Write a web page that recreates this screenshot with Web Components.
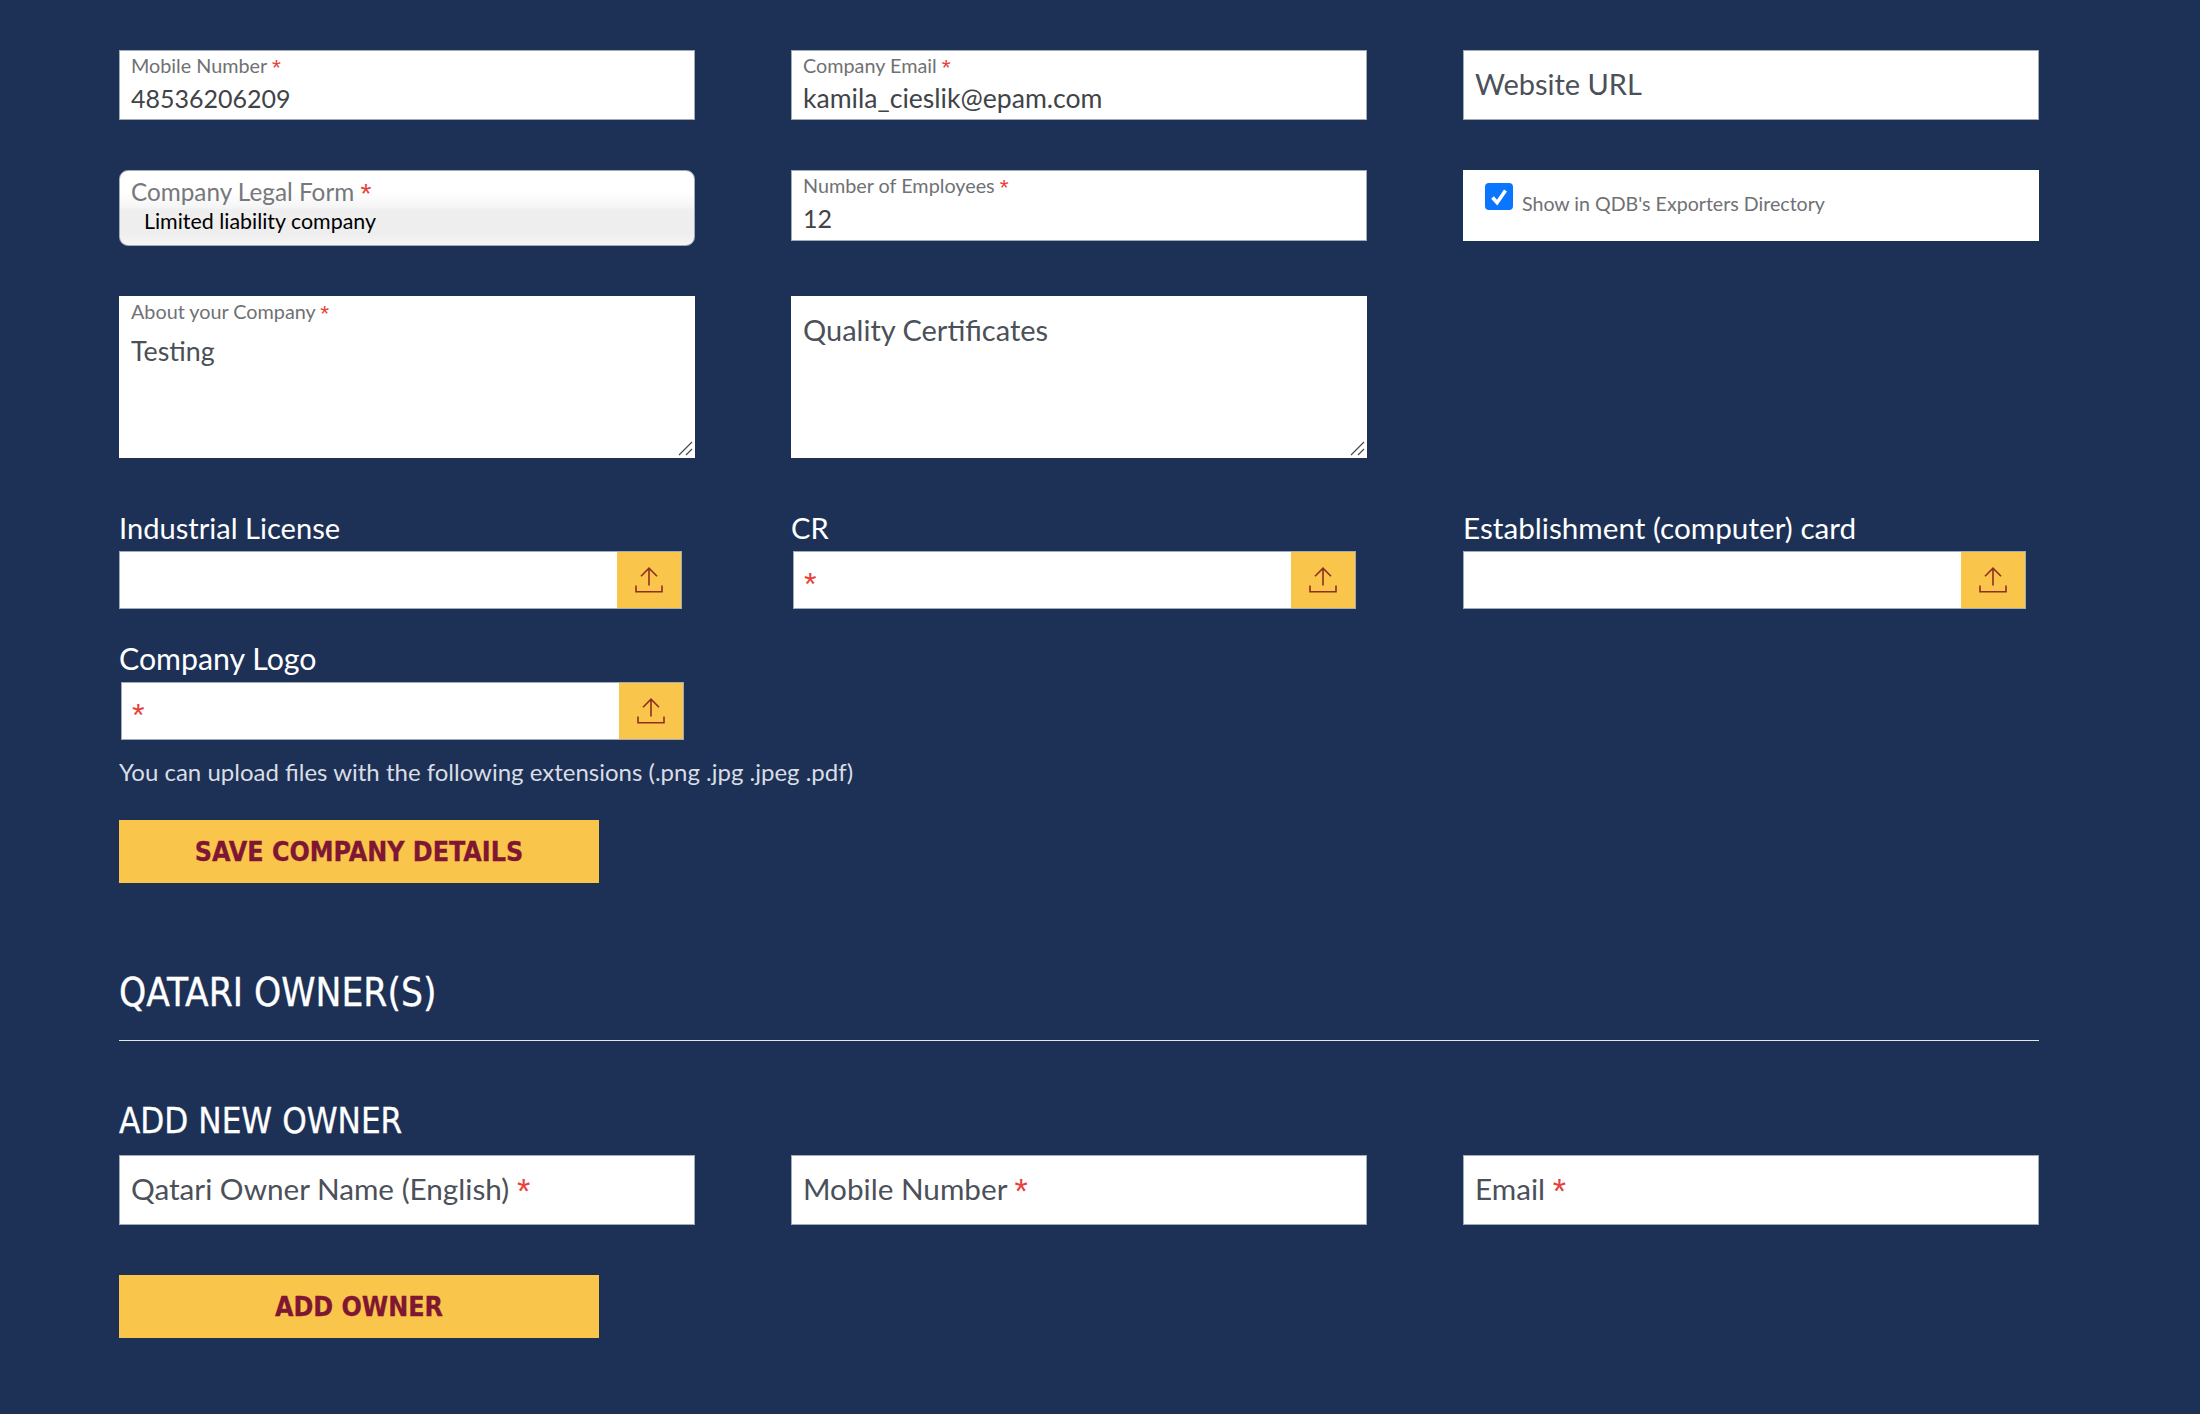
<!DOCTYPE html>
<html lang="en"><head><meta charset="utf-8"><title>Company details</title>
<style>
html,body{margin:0;padding:0;background:#1d3156;}
body{font-family:"Lato","Noto Sans",sans-serif;color:#fff;width:2200px;height:1414px;overflow:hidden;}
</style></head><body>
<qdb-page>
  <qdb-grid style="--mb:50px">
    <qdb-field label="Mobile Number" required value="48536206209"></qdb-field>
    <qdb-field label="Company Email" required value="kamila_cieslik@epam.com" style="--vs:26.6px"></qdb-field>
    <qdb-field placeholder="Website URL" style="--ps:29px"></qdb-field>
  </qdb-grid>
  <qdb-grid style="--mb:50px">
    <qdb-select label="Company Legal Form" value="Limited liability company"></qdb-select>
    <qdb-field label="Number of Employees" required value="12" style="--h:71px"></qdb-field>
    <qdb-check>Show in QDB's Exporters Directory</qdb-check>
  </qdb-grid>
  <qdb-grid style="--mb:47px">
    <qdb-area label="About your Company" required value="Testing"></qdb-area>
    <qdb-area placeholder="Quality Certificates"></qdb-area>
  </qdb-grid>
  <qdb-grid style="--mb:27px">
    <qdb-upload label="Industrial License" style="--ls:29.1px"></qdb-upload>
    <qdb-upload label="CR" required style="--ox:2px;--ls:29.1px"></qdb-upload>
    <qdb-upload label="Establishment (computer) card" style="--ls:29.7px"></qdb-upload>
  </qdb-grid>
  <qdb-grid style="--mb:0px">
    <qdb-upload label="Company Logo" required style="--ox:2px;--ls:30.3px"></qdb-upload>
  </qdb-grid>
  <qdb-hint>You can upload files with the following extensions (.png .jpg .jpeg .pdf)</qdb-hint>
  <qdb-action>SAVE COMPANY DETAILS</qdb-action>
  <qdb-section>QATARI OWNER(S)</qdb-section>
  <qdb-subhead>ADD NEW OWNER</qdb-subhead>
  <qdb-grid style="--mb:50px">
    <qdb-field placeholder="Qatari Owner Name (English)" required></qdb-field>
    <qdb-field placeholder="Mobile Number" required></qdb-field>
    <qdb-field placeholder="Email" required></qdb-field>
  </qdb-grid>
  <qdb-action>ADD OWNER</qdb-action>
</qdb-page>
<script>
const star = ' <span class="star">*</span>';
function def(name, css, html){
  customElements.define(name, class extends HTMLElement{
    connectedCallback(){
      if(this.shadowRoot) return;
      const r=this.attachShadow({mode:'open'});
      const a=k=>this.getAttribute(k)||'';
      const req=this.hasAttribute('required');
      r.innerHTML='<style>'+css+'</style>'+(typeof html==='function'?html(a,req):html);
    }
  });
}
const base='.star{color:#e8403a;font-size:1.15em;line-height:0;font-family:"Liberation Sans",sans-serif;vertical-align:-0.08em}';
def('qdb-page',':host{display:block;width:1920px;padding:50px 0 0 119px}','<slot></slot>');
def('qdb-grid',':host{display:grid;grid-template-columns:repeat(3,576px);column-gap:96px;align-items:start;margin-bottom:var(--mb,50px)}','<slot></slot>');
const boxCss=base+`:host{display:block;height:var(--h,70px);box-sizing:border-box;background:#fff;border:1px solid #a3abb8;padding:0 11px;overflow:hidden}
.l{font-size:19.8px;line-height:22px;color:#6f7174;padding-top:3px}
.v{font-size:var(--vs,25px);line-height:32px;color:#3f4449;margin-top:6px}
.p{font-size:var(--ps,29.7px);line-height:66px;color:#4b5059;}`;
def('qdb-field',boxCss,(a,req)=>a('placeholder')
  ? `<div class="p">${a('placeholder')}${req?star:''}</div>`
  : `<div class="l">${a('label')}${req?star:''}</div><div class="v">${a('value')}</div>`);
def('qdb-select',base+`:host{display:block;height:76px;box-sizing:border-box;border:1px solid #a3abb8;border-radius:9px;padding:0 11px;overflow:hidden;
 background:linear-gradient(#fff 0,#fff 28%,#f5f5f5 49%,#efefef 52%,#eeeeee 85%,#f6f6f6 100%)}
.l{font-size:24.3px;line-height:30px;color:#76787b;padding-top:6px}
.v{font-size:21.4px;line-height:28px;color:#000;padding-left:13px;margin-top:0}`,
 (a)=>`<div class="l">${a('label')}${star}</div><div class="v">${a('value')}</div>`);
def('qdb-check',`:host{display:flex;align-items:flex-start;height:71px;box-sizing:border-box;background:#fff;padding:13px 0 0 22px}
.b{width:28px;height:27px;border-radius:4px;background:#0a75ff;flex:none;display:flex;align-items:center;justify-content:center}
.t{font-size:19.6px;line-height:26px;color:#6f7174;margin:8px 0 0 9px}`,
 `<div class="b"><svg width="20" height="20" viewBox="0 0 20 20"><path d="M3.5 10.5l4.6 5.2L16.5 3.5" fill="none" stroke="#fff" stroke-width="3.6"/></svg></div><div class="t"><slot></slot></div>`);
def('qdb-area',base+`:host{display:block;position:relative;height:162px;box-sizing:border-box;background:#fff;padding:0 12px;overflow:hidden}
.l{font-size:19.8px;line-height:22px;color:#6f7174;padding-top:4px}
.v{font-size:26.8px;line-height:32px;color:#4a5057;margin-top:13px}
.p{font-size:29px;line-height:36px;color:#4b5059;padding-top:16px}
svg{position:absolute;right:2px;bottom:2px}`,
 (a,req)=>(a('placeholder')?`<div class="p">${a('placeholder')}</div>`:`<div class="l">${a('label')}${req?star:''}</div><div class="v">${a('value')}</div>`)
 +`<svg width="16" height="16" viewBox="0 0 16 16"><path d="M2 15L15 2M9 15l6-6" fill="none" stroke="#4a4a4a" stroke-width="1.2"/></svg>`);
def('qdb-upload',base+`:host{display:block}
.lab{font-size:var(--ls,29px);line-height:45px;height:46px;color:#fff;white-space:nowrap}
.row{display:flex;width:563px;height:58px;box-sizing:border-box;border:1px solid #a3abb8;background:#fff;margin-left:var(--ox,0)}
.in{flex:1;padding:0 10px;font-size:28px;line-height:59px;overflow:hidden}
.btn{width:64px;background:#fac54b;display:flex;align-items:center;justify-content:center}
svg{display:block}`,
 (a,req)=>`<div class="lab">${a('label')}</div><div class="row"><div class="in">${req?'<span class="star">*</span>':''}</div><div class="btn"><svg width="28" height="26" viewBox="0 0 28 26"><path d="M14 18.5V1.2M6 9.2l8-8 8 8M1 18.5v6.2h26v-6.2" fill="none" stroke="#8f2f20" stroke-width="1.6"/></svg></div></div>`);
def('qdb-hint',':host{display:block;font-size:24px;line-height:32px;color:#d9dde5;margin:16px 0 32px}','<slot></slot>');
def('qdb-action',`:host{display:flex;width:480px;height:63px;background:#fac54b;align-items:center;justify-content:center;
 font-family:"DejaVu Sans",sans-serif;font-stretch:condensed;font-weight:700;font-size:26.6px;color:#7f1734;-webkit-text-stroke:.3px #7f1734}`,'<slot></slot>');
def('qdb-section',`:host{display:block;margin-top:72px;font-family:"DejaVu Sans",sans-serif;font-stretch:condensed;font-size:38.5px;line-height:75px;height:85px;color:#fff;border-bottom:1px solid #dfe7ea;-webkit-text-stroke:.3px #fff}`,'<slot></slot>');
def('qdb-subhead',`:host{display:block;margin-top:56px;font-family:"DejaVu Sans",sans-serif;font-stretch:condensed;font-size:34.7px;line-height:49px;height:58px;color:#fff;-webkit-text-stroke:.3px #fff}`,'<slot></slot>');
</script>
</body></html>
